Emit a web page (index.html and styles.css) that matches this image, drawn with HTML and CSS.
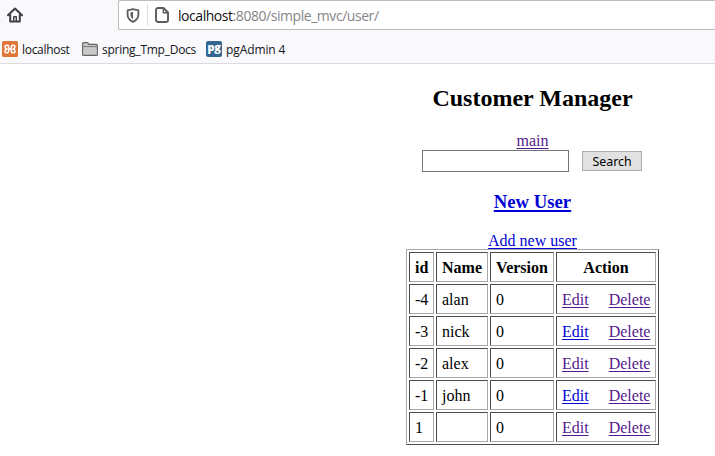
FILE: index.html
```html
<!DOCTYPE html>
<html lang="en">
<head>
<meta charset="utf-8">
<title>Customer Manager</title>
<link rel="stylesheet" href="styles.css">
</head>
<body>
<header class="chrome">
  <div class="toolbar">
    <svg class="home" width="16" height="16" viewBox="0 0 16 16" fill="none" stroke="#3f3f44" stroke-width="2" stroke-linecap="round" stroke-linejoin="round"><path d="M1 8.3 8 1.5l7 6.8M3.2 8v6.4h9.6V8"/><path d="M6.7 14V9.7h2.6V14" stroke-width="1.4"/></svg>
    <div class="address">
      <svg class="shield" width="14" height="15" viewBox="0 0 14 15"><path d="M7 1.1 12.4 2.3v4.2c0 3.6-2 5.9-5.4 7.4-3.4-1.5-5.4-3.8-5.4-7.4V2.3z" fill="none" stroke="#5b5b5f" stroke-width="1.8" stroke-linejoin="round"/><path d="M7 4v7C5.2 10 4.5 8.6 4.5 6.7V4.3z" fill="#5b5b5f"/></svg>
      <span class="divider"></span>
      <svg class="page" width="14" height="16" viewBox="0 0 14 16" fill="none" stroke="#5b5b5f" stroke-width="1.9" stroke-linejoin="round"><path d="M3 1h5.5L13 5.5V13a2 2 0 0 1-2 2H3a2 2 0 0 1-2-2V3a2 2 0 0 1 2-2z"/><path d="M8.3 1.2v4.5h4.5" stroke-width="1.4"/></svg>
      <span class="url">localhost<span class="path">:8080/simple_mvc/user/</span></span>
    </div>
  </div>
  <nav class="bookmarks">
    <a class="bookmark local"><svg width="16" height="16" viewBox="0 0 16 16"><rect width="16" height="16" rx="1.5" fill="#df7638"/><path d="M6.6 6.500v-.8q0-1.500-1.300-1.500H4.700Q3 4.200 3 5.600q0 2 2 2.400-2 .4-2 2.400 0 1.400 1.700 1.400h.6q1.300 0 1.300-1.500v-.8Q6.600 8 8 8t1.400 1.500v.8q0 1.500 1.300 1.500h.6q1.700 0 1.700-1.400 0-2-2-2.400 2-.4 2-2.400 0-1.400-1.700-1.400h-.6q-1.300 0-1.300 1.500v.8Q9.400 8 8 8T6.600 6.500z" fill="none" stroke="#fff" stroke-width="1.6" stroke-linejoin="round"/></svg><span>localhost</span></a>
    <a class="bookmark docs"><svg width="16" height="14" viewBox="0 0 16 14"><path d="M.6 12.4V1.6q0-1 1-1h3.6q.7 0 1 .7l.5 1.1h7.7q1 0 1 1v9q0 1-1 1H1.6q-1 0-1-1z" fill="#c9c9c9" stroke="#636363" stroke-width="1.1"/><path d="M1 4.6h14" stroke="#777" stroke-width="1"/></svg><span>spring_Tmp_Docs</span></a>
    <a class="bookmark pg"><span class="pg-logo">pg</span><span>pgAdmin 4</span></a>
  </nav>
</header>
<main class="content">
  <h2>Customer Manager</h2>
  <form class="search">
    <a class="visited" href="#">main</a>
    <div class="fields"><input type="text" aria-label="Keyword"><button type="button">Search</button></div>
  </form>
  <h3><a href="#">New User</a></h3>
  <a class="add" href="#">Add new user</a>
  <table>
    <thead><tr><th class="c-id">id</th><th class="c-name">Name</th><th class="c-version">Version</th><th class="c-action">Action</th></tr></thead>
    <tbody>
      <tr><td>-4</td><td>alan</td><td>0</td><td><a class="visited" href="#">Edit</a><a class="visited delete" href="#">Delete</a></td></tr>
      <tr><td>-3</td><td>nick</td><td>0</td><td><a href="#">Edit</a><a class="visited delete" href="#">Delete</a></td></tr>
      <tr><td>-2</td><td>alex</td><td>0</td><td><a class="visited" href="#">Edit</a><a class="visited delete" href="#">Delete</a></td></tr>
      <tr><td>-1</td><td>john</td><td>0</td><td><a href="#">Edit</a><a class="visited delete" href="#">Delete</a></td></tr>
      <tr><td>1</td><td></td><td>0</td><td><a class="visited" href="#">Edit</a><a class="visited delete" href="#">Delete</a></td></tr>
    </tbody>
  </table>
</main>
</body>
</html>
```
FILE: styles.css
```css
* { box-sizing: border-box; }
html, body { height: 100%; }
body {
  margin: 0;
  overflow: hidden;
  background: #fff;
  color: #000;
  font: 16px/18px "Liberation Serif", serif;
}
svg { display: block; flex: none; }

.chrome {
  height: 64px;
  background: #f9f9fb;
  border-bottom: 1px solid #dcdce0;
  font-family: "Open Sans", "Noto Sans", sans-serif;
}
.toolbar { display: flex; height: 35px; padding-left: 7px; }
.home { margin-top: 7px; }
.address {
  display: flex;
  align-items: center;
  flex: 1;
  height: 30px;
  margin-left: 95px;
  padding-left: 7px;
  background: #fff;
  border: 1px solid #bcbcbe;
  border-right: 0;
  border-radius: 2px 0 0 2px;
}
.divider { width: 1px; height: 22px; margin: 0 7px; background: #dedee0; }
.url {
  margin: 1px 0 0 9px;
  font-size: 14px;
  letter-spacing: -0.45px;
  white-space: nowrap;
  color: #111;
}
.path { color: #858588; }

.bookmarks { display: flex; height: 28px; padding-left: 2px; }
.bookmark {
  display: flex;
  align-items: center;
  gap: 4px;
  font-size: 12px;
  line-height: 16px;
  white-space: nowrap;
  color: #15141a;
}
.bookmark > span:last-child { padding-top: 2px; }
.local { width: 80px; letter-spacing: -0.3px; }
.docs { width: 124px; letter-spacing: -0.25px; }
.pg { letter-spacing: -0.1px; }
.pg-logo {
  width: 16px;
  height: 16px;
  border-radius: 2px;
  background: #336690;
  color: #fff;
  font-size: 11px;
  font-weight: 800;
  line-height: 12px;
  letter-spacing: -0.4px;
  text-align: center;
}

.content { padding: 20px 0 0 350px; text-align: center; }
a { color: #0000d4; text-decoration-thickness: 1px; text-underline-offset: 2px; }
.visited { color: #551a8b; }
h2 { margin: 0 0 20px; font-size: 24px; line-height: 28px; }
.search { height: 40px; }
.search > a { display: block; width: max-content; margin: 0 auto; }
.fields { display: flex; justify-content: center; align-items: center; gap: 13px; height: 22px; padding-right: 1px; }
input { width: 147px; height: 22px; padding: 1px; border: 1px solid #767678; background: #fff; }
button {
  width: 60px;
  height: 20px;
  padding: 1px 0 0;
  border: 1px solid #adadad;
  background: #e1e1e1;
  color: #000;
  font: 12.4px/16px "Noto Sans", sans-serif;
}
h3 { margin: 20px 0; font-size: 18.72px; line-height: 20px; }
h3 a { text-decoration-thickness: 2px; }
.add { display: block; width: max-content; height: 17px; margin: 0 auto; }
table {
  width: 253px;
  height: 196px;
  margin: 0 auto;
  table-layout: fixed;
  border: 1px solid;
  border-color: #a8a8a8 #4c4c4c #4c4c4c #a8a8a8;
  border-spacing: 2px;
}
th, td {
  height: 30px;
  padding: 6px 5px 4px;
  border: 1px solid;
  border-color: #4c4c4c #a8a8a8 #a8a8a8 #4c4c4c;
  white-space: nowrap;
}
td { text-align: left; }
.c-id { width: 25px; }
.c-name { width: 52px; }
.c-version { width: 64px; }
.c-action { width: 100px; }
.delete { margin-left: 20px; }
```
